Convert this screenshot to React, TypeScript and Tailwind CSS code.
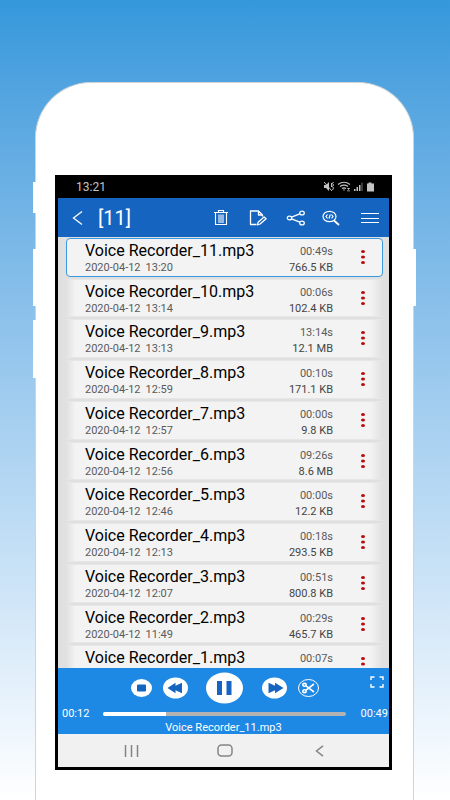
import React from "react";

type Recording = { name: string; length: string; date?: string; time?: string; size?: string };

const recordings: Recording[] = [
  { name: "Voice Recorder_11.mp3", date: "2020-04-12", time: "13:20", length: "00:49s", size: "766.5 KB" },
  { name: "Voice Recorder_10.mp3", date: "2020-04-12", time: "13:14", length: "00:06s", size: "102.4 KB" },
  { name: "Voice Recorder_9.mp3", date: "2020-04-12", time: "13:13", length: "13:14s", size: "12.1 MB" },
  { name: "Voice Recorder_8.mp3", date: "2020-04-12", time: "12:59", length: "00:10s", size: "171.1 KB" },
  { name: "Voice Recorder_7.mp3", date: "2020-04-12", time: "12:57", length: "00:00s", size: "9.8 KB" },
  { name: "Voice Recorder_6.mp3", date: "2020-04-12", time: "12:56", length: "09:26s", size: "8.6 MB" },
  { name: "Voice Recorder_5.mp3", date: "2020-04-12", time: "12:46", length: "00:00s", size: "12.2 KB" },
  { name: "Voice Recorder_4.mp3", date: "2020-04-12", time: "12:13", length: "00:18s", size: "293.5 KB" },
  { name: "Voice Recorder_3.mp3", date: "2020-04-12", time: "12:07", length: "00:51s", size: "800.8 KB" },
  { name: "Voice Recorder_2.mp3", date: "2020-04-12", time: "11:49", length: "00:29s", size: "465.7 KB" },
  { name: "Voice Recorder_1.mp3", length: "00:07s" },
];

function StatusBar() {
  return (
    <div className="flex h-[23px] items-center justify-between bg-black pl-[18px] pr-[14px] text-[#c4c4c4]">
      <span className="text-xs">13:21</span>
      <svg width="52" height="11" viewBox="0 0 52 11" fill="currentColor" aria-hidden="true">
        <path d="M1 4h2l3-3v9L3 7H1z" />
        <path d="M1 1l8 9M8 2l1 1-1 1 1 1-1 1M10.500 1l-1 1.500 1 1.500-1 1.500 1 1.500-1 2" fill="none" stroke="currentColor" strokeWidth="1" />
        <path d="M15 3.500c4-3 8-3 12 0M17 5.500c3-2 5-2 8 0M19 7.500c1.500-1 2.500-1 4 0" fill="none" stroke="currentColor" strokeWidth="1.200" />
        <path d="M20 8.500h2L21 10zM24 7l1.500 2 1.500-2zM24 9.500h3v.8h-3z" />
        <path d="M31 8h1.500v2H31zM33.500 6H35v4h-1.500zM36 4h1.500v6H36z" />
        <path d="M38.500 1.500h1V10h-1z" opacity=".6" />
        <path d="M45.500 1.500h3v1H51v8h-7v-8h1.500z" />
      </svg>
    </div>
  );
}

function Header() {
  return (
    <header className="flex h-[39px] items-center bg-[#1565c0] pl-[14px] pr-[10px] text-white">
      <button type="button" aria-label="Back" className="w-[26px]">
        <svg width="12" height="16" viewBox="0 0 12 16" fill="none" stroke="currentColor" strokeWidth="1.300"><path d="M10 1.500 1.500 8l8.500 6.500" /></svg>
      </button>
      <h1 className="flex-1 text-xl">[11]</h1>
      <div className="flex items-center">
        <button type="button" aria-label="Delete" className="mr-[20px]">
          <svg width="16" height="18" viewBox="0 0 16 18" fill="none" stroke="currentColor" strokeWidth="1.100">
            <path d="M1 3.500h14M5.500 3V1.500h5V3M2.500 3.500v12h11v-12M6 5.500v8.500M8 5.500v8.500M10 5.500v8.500" />
          </svg>
        </button>
        <button type="button" aria-label="Rename" className="mr-[19px]">
          <svg width="18" height="18" viewBox="0 0 18 18" fill="none" stroke="currentColor" strokeWidth="1.300" strokeLinejoin="round">
            <path d="M13.500 7.500V6L9.500 2H1.500v13.500H7.500M9.500 2v4h4M8.500 15.800l.6-2.600 6-5.200 2 1.800-6 5.200z" />
          </svg>
        </button>
        <button type="button" aria-label="Share" className="mr-[16px]">
          <svg width="20" height="18" viewBox="0 0 20 18" fill="none" stroke="currentColor" strokeWidth="1.300">
            <ellipse cx="3.500" cy="9" rx="2.200" ry="1.900" /><ellipse cx="16" cy="4" rx="2.300" ry="1.900" /><ellipse cx="16" cy="14" rx="2.300" ry="1.900" />
            <path d="M5.500 8.200l8.300-3.400M5.500 9.800l8.300 3.400" />
          </svg>
        </button>
        <button type="button" aria-label="Search" className="mr-[21px]">
          <svg width="18" height="18" viewBox="0 0 18 18" fill="none" stroke="currentColor" strokeWidth="1.200">
            <ellipse cx="7.500" cy="7.500" rx="6.500" ry="5.200" /><path d="M12 11.500l5 4.500" strokeWidth="1.700" />
            <path d="M5.500 5.500L4 7.500l1.500 2M7 9.500l1.300-4M9.500 5.500l1.500 2-1.500 2" />
          </svg>
        </button>
        <button type="button" aria-label="Menu">
          <svg width="18" height="12" viewBox="0 0 18 12" stroke="currentColor" strokeWidth="1"><path d="M0 1.500h18M0 6.500h18M0 10.500h18" /></svg>
        </button>
      </div>
    </header>
  );
}

function RecordingRow({ item, selected }: { item: Recording; selected: boolean }) {
  return (
    <li className="py-px pl-2 pr-[6px]">
      <div
        className={
          selected
            ? "flex h-full items-start rounded-sm border border-[#3898e0] bg-[#f3f3f3] pl-[18px] pr-[17px] pt-px"
            : "flex h-full items-start border-y border-[#e6e6e6] bg-[linear-gradient(to_right,#e0e0e0,#f3f3f3_3%,#f3f3f3_96%,#e0e0e0)] pl-[19px] pr-[18px] pt-px"
        }
      >
        <div className="flex-1">
          <h2 className="text-base leading-[21px] text-black">{item.name}</h2>
          {item.date && (
            <p className="flex gap-[5px] text-[11px] leading-[14px] text-[#5a5a5a]"><span>{item.date}</span><span>{item.time}</span></p>
          )}
        </div>
        <div className="mr-[28px] pt-[2px] text-right text-[11px] text-[#5a5a5a]">
          <p className="leading-5">{item.length}</p>
          {item.size && <p className="leading-[12px] text-[#444444]">{item.size}</p>}
        </div>
        <button type="button" aria-label={"Options for " + item.name} className="mt-[9px] text-[#b90b0b]">
          <svg width="4" height="16" viewBox="0 0 4 16" fill="currentColor"><ellipse cx="2" cy="2.500" rx="2" ry="1.600" /><ellipse cx="2" cy="8" rx="2" ry="1.600" /><ellipse cx="2" cy="13.500" rx="2" ry="1.600" /></svg>
        </button>
      </div>
    </li>
  );
}

function Player() {
  return (
    <section aria-label="Player" className="h-[66px] bg-[#1e88e5] text-white">
      <div className="flex h-10 items-center pl-[73px] pr-[5px]">
        <button type="button" aria-label="Stop" className="mr-[11px]">
          <svg width="21" height="18" viewBox="0 0 21 18"><ellipse cx="10.500" cy="9" rx="10.500" ry="9" fill="#fff" /><rect x="6" y="5.500" width="9" height="7" rx="1" fill="#1565c0" /></svg>
        </button>
        <button type="button" aria-label="Rewind" className="mr-[18px]">
          <svg width="25" height="22" viewBox="0 0 25 22"><ellipse cx="12.500" cy="11" rx="12.500" ry="10.500" fill="#fff" /><path d="M4.500 11l8-5.200v3l6.500-3v10.400l-6.500-3v3z" fill="#1565c0" /></svg>
        </button>
        <button type="button" aria-label="Pause" className="mr-[19px]">
          <svg width="37" height="32" viewBox="0 0 37 32"><ellipse cx="18.500" cy="16" rx="18.500" ry="15.500" fill="#fff" /><path d="M11 9h5v14h-5zM20.500 9h5v14h-5z" fill="#1565c0" /></svg>
        </button>
        <button type="button" aria-label="Fast forward" className="mr-[11px]">
          <svg width="25" height="22" viewBox="0 0 25 22"><ellipse cx="12.500" cy="11" rx="12.500" ry="10.500" fill="#fff" /><path d="M6.500 5.800l6.500 3v-3l8.500 5.200-8.500 5.200v-3l-6.500 3z" fill="#1565c0" /></svg>
        </button>
        <button type="button" aria-label="Cut">
          <svg width="21" height="18" viewBox="0 0 21 18" fill="none" stroke="currentColor"><ellipse cx="10.500" cy="9" rx="10" ry="8.500" /><g strokeWidth="1.600"><ellipse cx="6.500" cy="5.800" rx="1.700" ry="1.400" /><ellipse cx="6.500" cy="12.200" rx="1.700" ry="1.400" /><path d="M8 6.800l8 6.200M8 11.200l8-6.200" /></g></svg>
        </button>
        <button type="button" aria-label="Full screen" className="-mt-3 ml-auto">
          <svg width="14" height="12" viewBox="0 0 14 12" fill="none" stroke="currentColor" strokeWidth="1.400"><path d="M1 4V1h3.500M9.500 1H13v3M13 8v3H9.500M4.500 11H1V8" /></svg>
        </button>
      </div>
      <div className="flex h-3 items-center pl-1 pr-px text-[11px] leading-3">
        <span className="w-[41px]">00:12</span>
        <div role="progressbar" aria-label="Playback position" aria-valuemin={0} aria-valuemax={49} aria-valuenow={12} className="h-1 flex-1 overflow-hidden rounded-sm bg-[#b3b3b3]">
          <div className="h-full w-[26%] bg-white" />
        </div>
        <span className="w-[42px] text-right">00:49</span>
      </div>
      <p className="pt-px text-center text-[11px] leading-[13px]">Voice Recorder_11.mp3</p>
    </section>
  );
}

function NavBar() {
  return (
    <nav className="grid h-[33px] grid-cols-[1fr_18px_1fr] items-center bg-[#f1f1f1] text-[#858585]">
      <button type="button" aria-label="Recent apps" className="ml-[66px] justify-self-start">
        <svg width="15" height="12" viewBox="0 0 15 12" stroke="currentColor" strokeWidth="1.500"><path d="M1.500 0v12M7.500 0v12M13.500 0v12" /></svg>
      </button>
      <button type="button" aria-label="Home" className="justify-self-end">
        <svg width="16" height="13" viewBox="0 0 16 13" fill="none" stroke="currentColor" strokeWidth="1.500"><rect x="1" y="1" width="14" height="11" rx="3.500" /></svg>
      </button>
      <button type="button" aria-label="Back" className="mr-[65px] justify-self-end">
        <svg width="9" height="12" viewBox="0 0 9 12" fill="none" stroke="currentColor" strokeWidth="1.500"><path d="M8 .8 1.500 6 8 11.200" /></svg>
      </button>
    </nav>
  );
}

export default function App() {
  return (
    <main className="flex min-h-screen flex-col bg-linear-to-b from-[#3498db] to-white pl-[35px] pr-9 pt-[82px] font-['Roboto','Liberation_Sans',sans-serif]">
      <div className="relative flex-1 rounded-t-[56px] border border-b-0 border-[#d0d4d8] bg-white pl-[19px] pr-[21px] pt-[92px] pb-[30px]">
        <span className="absolute -left-[3px] top-[99px] h-[31px] w-[3px] bg-white" />
        <span className="absolute -left-[3px] top-[166px] h-[57px] w-[3px] bg-white" />
        <span className="absolute -left-[3px] top-[237px] h-[58px] w-[3px] bg-white" />
        <span className="absolute -right-[3px] top-[166px] h-[57px] w-[3px] bg-white" />
        <div className="border-x-[3px] border-b-[3px] border-black">
          <StatusBar />
          <Header />
          <div className="h-[431px] overflow-hidden bg-[#e0e0e0]">
            <ul className="grid h-[448px] auto-rows-fr">
              {recordings.map((item, i) => <RecordingRow key={item.name} item={item} selected={i === 0} />)}
            </ul>
          </div>
          <Player />
          <NavBar />
        </div>
      </div>
    </main>
  );
}
